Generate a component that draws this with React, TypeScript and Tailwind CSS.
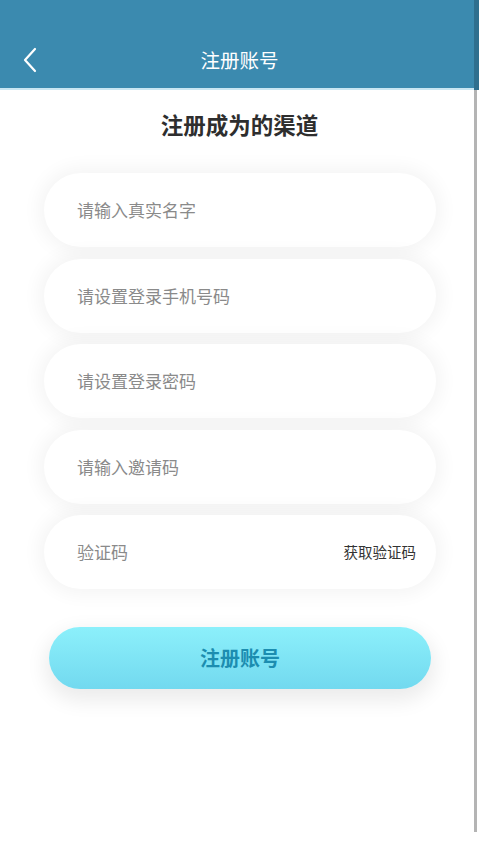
import React from 'react';

const fields = ['请输入真实名字', '请设置登录手机号码', '请设置登录密码', '请输入邀请码'];

export default function App() {
  return (
    <div
      className="relative w-[479px] h-[851px] bg-white overflow-hidden"
      style={{ fontFamily: '"Noto Sans CJK SC", "Noto Sans", sans-serif' }}
    >
      {/* Header */}
      <div className="relative h-[90px] bg-[#3b8aaf] border-b-2 border-[#c9e6f2]">
        <button className="absolute left-[18px] top-[44px] w-[24px] h-[32px] flex items-center justify-center">
          <svg width="16" height="26" viewBox="0 0 16 26" fill="none">
            <path d="M13 2 L3 13 L13 24" stroke="#ffffff" strokeWidth="2.2" strokeLinecap="round" strokeLinejoin="round" />
          </svg>
        </button>
        <div className="absolute inset-x-0 top-[45px] text-center text-[19.5px] leading-[30px] text-white">注册账号</div>
      </div>

      {/* Subtitle */}
      <div className="mt-[17px] text-center text-[22.5px] leading-[34px] font-bold text-[#2e2e2e]">注册成为的渠道</div>

      {/* Form */}
      <div className="mt-[32px] ml-[44px] mr-[43px] flex flex-col gap-[11.5px]">
        {fields.map((f) => (
          <div
            key={f}
            className="h-[74px] rounded-full bg-white shadow-[0_0_18px_6px_rgba(0,0,0,0.045)] flex items-center px-[33px]"
          >
            <span className="text-[17px] text-[#8a8a8a]">{f}</span>
          </div>
        ))}
        <div className="h-[74px] rounded-full bg-white shadow-[0_0_18px_6px_rgba(0,0,0,0.045)] flex items-center justify-between pl-[33px] pr-[20px]">
          <span className="text-[17px] text-[#8a8a8a]">验证码</span>
          <span className="text-[14.5px] text-[#333333]">获取验证码</span>
        </div>
      </div>

      {/* Submit */}
      <div className="mt-[38px] ml-[49px] mr-[48px]">
        <button className="w-full h-[62px] rounded-full bg-gradient-to-b from-[#8cf0fb] to-[#72d9ef] shadow-[0_8px_20px_4px_rgba(0,0,0,0.08)] text-[20px] font-bold text-[#1c8db0]">
          注册账号
        </button>
      </div>

      {/* Scrollbar strip */}
      <div className="absolute right-0 top-0 w-[5px] h-[90px] bg-[#2f6f8e]" />
      <div className="absolute right-[2px] top-[90px] w-[3px] h-[742px] bg-[#b4b4b4]" />
    </div>
  );
}
